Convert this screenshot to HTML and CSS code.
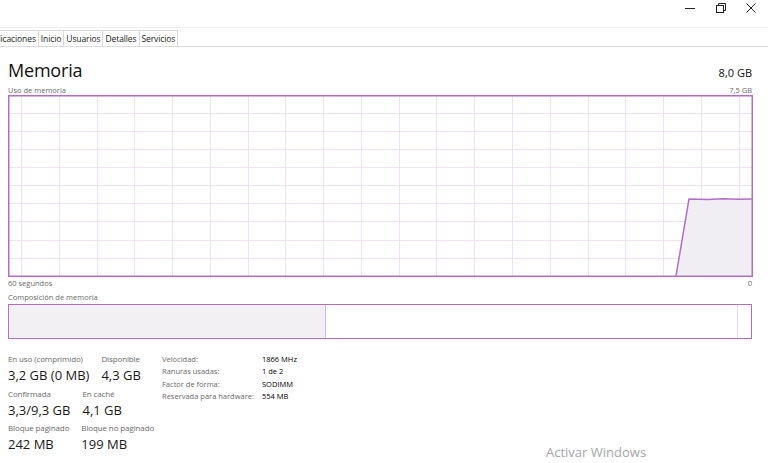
FILE: index.html
```html
<!DOCTYPE html>
<html lang="es">
<head>
<meta charset="utf-8">
<title>Administrador de tareas - Memoria</title>
<link rel="stylesheet" href="styles.css">
</head>
<body>
<div class="window">
  <div class="titlebar">
    <span class="ctl">
      <svg width="12" height="12" viewBox="0 0 12 12"><line x1="1" y1="6.5" x2="11" y2="6.5" stroke="#222" stroke-width="1"/></svg>
    </span>
    <span class="ctl">
      <svg width="12" height="12" viewBox="0 0 12 12"><rect x="1.5" y="3.5" width="7" height="7" fill="none" stroke="#222" stroke-width="1"/><path d="M3.5 3.5 V1.5 H10.5 V8.5 H8.5" fill="none" stroke="#222" stroke-width="1"/></svg>
    </span>
    <span class="ctl">
      <svg width="12" height="12" viewBox="0 0 12 12"><path d="M1.5 1.5 L10.5 10.5 M10.5 1.5 L1.5 10.5" stroke="#222" stroke-width="1"/></svg>
    </span>
  </div>
  <div class="tabs">
    <span class="tab first">Aplicaciones</span>
    <span class="tab">Inicio</span>
    <span class="tab">Usuarios</span>
    <span class="tab">Detalles</span>
    <span class="tab">Servicios</span>
  </div>
  <main class="content">
    <div class="head">
      <h1 class="title">Memoria</h1>
      <span class="total">8,0 GB</span>
    </div>
    <div class="caption">
      <span>Uso de memoria</span>
      <span>7,5 GB</span>
    </div>
    <svg class="graph" width="745" height="182" viewBox="0 0 745 182">
      <g stroke="#f0e2f4" stroke-width="1">
        <line x1="13.5" y1="0" x2="13.5" y2="182"/>
        <line x1="51.5" y1="0" x2="51.5" y2="182"/>
        <line x1="89.5" y1="0" x2="89.5" y2="182"/>
        <line x1="126.5" y1="0" x2="126.5" y2="182"/>
        <line x1="164.5" y1="0" x2="164.5" y2="182"/>
        <line x1="202.5" y1="0" x2="202.5" y2="182"/>
        <line x1="240.5" y1="0" x2="240.5" y2="182"/>
        <line x1="277.5" y1="0" x2="277.5" y2="182"/>
        <line x1="315.5" y1="0" x2="315.5" y2="182"/>
        <line x1="353.5" y1="0" x2="353.5" y2="182"/>
        <line x1="391.5" y1="0" x2="391.5" y2="182"/>
        <line x1="428.5" y1="0" x2="428.5" y2="182"/>
        <line x1="466.5" y1="0" x2="466.5" y2="182"/>
        <line x1="504.5" y1="0" x2="504.5" y2="182"/>
        <line x1="542.5" y1="0" x2="542.5" y2="182"/>
        <line x1="580.5" y1="0" x2="580.5" y2="182"/>
        <line x1="617.5" y1="0" x2="617.5" y2="182"/>
        <line x1="655.5" y1="0" x2="655.5" y2="182"/>
        <line x1="693.5" y1="0" x2="693.5" y2="182"/>
        <line x1="731.5" y1="0" x2="731.5" y2="182"/>
        <line x1="0" y1="18.5" x2="745" y2="18.5"/>
        <line x1="0" y1="36.5" x2="745" y2="36.5"/>
        <line x1="0" y1="54.5" x2="745" y2="54.5"/>
        <line x1="0" y1="72.5" x2="745" y2="72.5"/>
        <line x1="0" y1="90.5" x2="745" y2="90.5"/>
        <line x1="0" y1="108.5" x2="745" y2="108.5"/>
        <line x1="0" y1="126.5" x2="745" y2="126.5"/>
        <line x1="0" y1="145.5" x2="745" y2="145.5"/>
        <line x1="0" y1="163.5" x2="745" y2="163.5"/>
      </g>
      <polygon points="668,181 681,104 744,104 744,181" fill="#f1eef3"/>
      <polyline points="668,181 681,104 700,104.5 715,103.8 730,104.3 744,104" fill="none" stroke="#b46ccc" stroke-width="1.5"/>
      <rect x="0.75" y="0.75" width="743.5" height="180.5" fill="none" stroke="#b46ccc" stroke-width="1.5"/>
    </svg>
    <div class="caption">
      <span>60 segundos</span>
      <span>0</span>
    </div>
    <div class="caption comp-label">
      <span>Composición de memoria</span>
    </div>
    <div class="compbar">
      <div class="seg inuse"></div>
      <div class="seg standby"></div>
      <div class="seg free"></div>
    </div>
    <div class="stats">
      <div class="stat-grid">
        <div class="row">
          <div class="stat"><div class="lbl">En uso (comprimido)</div><div class="val">3,2 GB (0 MB)</div></div>
          <div class="stat"><div class="lbl">Disponible</div><div class="val">4,3 GB</div></div>
        </div>
        <div class="row">
          <div class="stat"><div class="lbl">Confirmada</div><div class="val">3,3/9,3 GB</div></div>
          <div class="stat"><div class="lbl">En caché</div><div class="val">4,1 GB</div></div>
        </div>
        <div class="row">
          <div class="stat"><div class="lbl">Bloque paginado</div><div class="val">242 MB</div></div>
          <div class="stat"><div class="lbl">Bloque no paginado</div><div class="val">199 MB</div></div>
        </div>
      </div>
      <dl class="props">
        <dt>Velocidad:</dt><dd>1866 MHz</dd>
        <dt>Ranuras usadas:</dt><dd>1 de 2</dd>
        <dt>Factor de forma:</dt><dd>SODIMM</dd>
        <dt>Reservada para hardware:</dt><dd>554 MB</dd>
      </dl>
    </div>
  </main>
  <div class="watermark">Activar Windows</div>
</div>
</body>
</html>
```
FILE: styles.css
```css
* { box-sizing: border-box; }
html, body { margin: 0; padding: 0; }
body {
  width: 768px;
  height: 463px;
  overflow: hidden;
  background: #fff;
  font-family: "Open Sans", "Noto Sans", sans-serif;
  color: #1a1a1a;
}
.window { position: relative; width: 768px; height: 463px; overflow: hidden; }

.titlebar {
  height: 28px;
  display: flex;
  justify-content: flex-end;
  align-items: flex-start;
  border-bottom: 1px solid #f0f0f0;
}
.ctl {
  width: 31px;
  height: 14px;
  display: flex;
  justify-content: center;
  align-items: center;
  padding-top: 1px;
}
.ctl:last-child { width: 30px; margin-right: 2px; }

.tabs {
  display: flex;
  height: 17px;
  margin-top: 2px;
  border-bottom: 1px solid #dcdcdc;
  overflow: hidden;
  font-size: 8.5px;
  line-height: 14px;
  letter-spacing: -0.1px;
}
.tab {
  padding: 1px 2px 0 2px;
  border: 1px solid #d9d9d9;
  border-bottom: none;
  border-left: none;
  color: #222;
  background: #fff;
  white-space: nowrap;
}
.tab.first { margin-left: -14px; }

.content { padding: 0 16px 0 8px; }
.head {
  display: flex;
  justify-content: space-between;
  align-items: baseline;
  height: 38px;
  padding-top: 11px;
}
.title {
  margin: 0;
  font-size: 18px;
  font-weight: 400;
  letter-spacing: -0.2px;
  line-height: 24px;
  color: #111;
}
.total { font-size: 11px; color: #111; }

.caption {
  display: flex;
  justify-content: space-between;
  font-size: 7.5px;
  line-height: 10px;
  color: #6b6b6b;
  height: 10px;
}
.graph { display: block; }
.graph + .caption { margin-top: 1px; }
.comp-label { margin-top: 4px; }

.compbar {
  display: flex;
  height: 35px;
  margin-top: 2px;
  border: 1.5px solid #b46ccc;
}
.seg { height: 100%; }
.inuse { width: 317px; background: #f2f0f3; border-right: 1px solid #d9b3e4; }
.standby { flex: 1; border-right: 1px solid #ead7ef; }
.free { width: 13px; }

.stats {
  display: flex;
  align-items: flex-start;
  margin-top: 15px;
}
.stat-grid { width: 154px; }
.row { display: flex; gap: 12px; margin-bottom: 3.5px; }
.lbl { font-size: 8px; letter-spacing: -0.12px; line-height: 10px; color: #6b6b6b; white-space: nowrap; }
.val { font-size: 13px; line-height: 20px; margin-top: 1px; color: #1a1a1a; white-space: nowrap; }

.props {
  margin: 0;
  display: grid;
  grid-template-columns: 100px auto;
  row-gap: 2.3px;
  font-size: 7.5px;
  line-height: 10px;
}
.props dt { color: #6b6b6b; }
.props dd { margin: 0; color: #000; }

.watermark {
  position: absolute;
  left: 546px;
  top: 443px;
  font-size: 13px;
  color: #a6a6a6;
}
```
